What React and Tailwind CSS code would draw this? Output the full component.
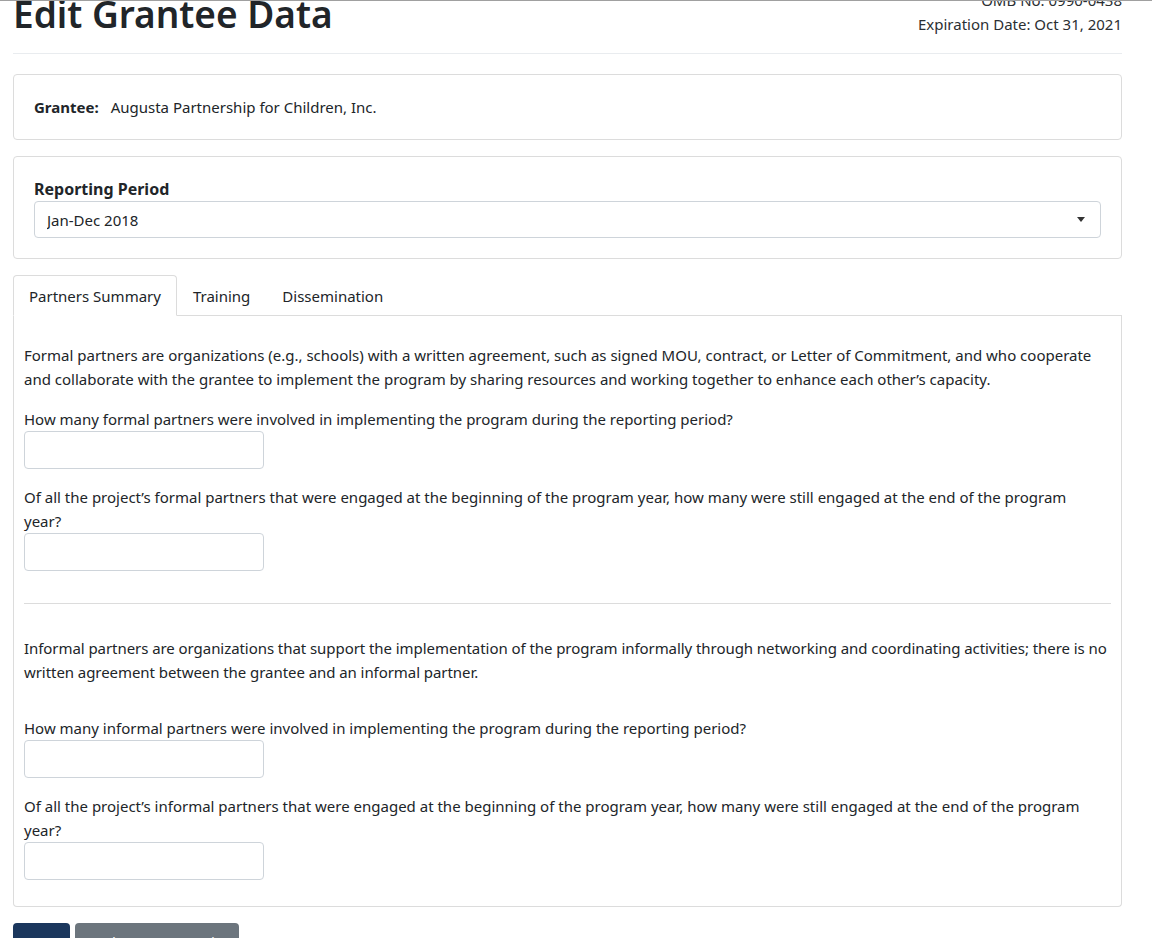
import React, { useState } from 'react';

const questionsFormal = [
    'How many formal partners were involved in implementing the program during the reporting period?',
    "Of all the project's formal partners that were engaged at the beginning of the program year, how many were still engaged at the end of the program year?",
];

const questionsInformal = [
    'How many informal partners were involved in implementing the program during the reporting period?',
    "Of all the project's informal partners that were engaged at the beginning of the program year, how many were still engaged at the end of the program year?",
];

const Question = ({ label }) => {
    const [value, setValue] = useState('');
    return (
        <div className="mb-[16px]">
            <label className="block leading-[24px] pr-[30px]">{label.replace(/'/g, '\u2019')}</label>
            <input
                type="text"
                value={value}
                onChange={(e) => setValue(e.target.value)}
                className="block w-[240px] h-[38px] border border-[#ced4da] rounded-[4px] px-3 outline-none"
            />
        </div>
    );
};

const tabs = ['Partners Summary', 'Training', 'Dissemination'];

const App = () => {
    const [activeTab, setActiveTab] = useState(0);

    return (
        <div
            className="relative w-[1162px] h-[938px] overflow-hidden bg-white text-[#212529] text-[15px] leading-[24px]"
            style={{ fontFamily: '"Noto Sans", "Open Sans", sans-serif' }}
        >
            <div className="absolute top-0 left-0 w-[1152px] h-px bg-[#a0a0a0] z-10" />

            <div className="mx-[13px] w-[1109px] -mt-[12px]">
                {/* page header */}
                <div className="flex justify-between items-end">
                    <h1 className="text-[37px] leading-[48px] font-semibold">Edit Grantee Data</h1>
                    <div className="text-right leading-[24px] text-[#2b2f33] pb-[2px]">
                        <div>OMB No. 0990-0438</div>
                        <div>Expiration Date: Oct 31, 2021</div>
                    </div>
                </div>
                <hr className="mt-[15px] border-t border-[#e9ecef]" />

                {/* grantee card */}
                <div className="mt-[20px] border border-[#dcdcdc] rounded-[4px] px-[20px] py-[20px]">
                    <p>
                        <span className="font-bold mr-[12px]">Grantee:</span>
                        Augusta Partnership for Children, Inc.
                    </p>
                </div>

                {/* reporting period */}
                <div className="mt-[16px] border border-[#dcdcdc] rounded-[4px] px-[20px] pt-[20px] pb-[20px]">
                    <label className="block font-bold leading-[24px] text-[16px]">Reporting Period</label>
                    <div className="relative">
                        <select className="block w-full h-[37px] border border-[#ced4da] rounded-[4px] px-[12px] appearance-none bg-white outline-none">
                            <option>Jan-Dec 2018</option>
                            <option>Jan-Dec 2019</option>
                            <option>Jan-Dec 2020</option>
                        </select>
                        <svg className="absolute right-[16px] top-[16px]" width="8" height="5" viewBox="0 0 8 5">
                            <path d="M0 0 L8 0 L4 5 Z" fill="#333" />
                        </svg>
                    </div>
                </div>

                {/* tabs */}
                <div className="mt-[16px] flex border-b border-[#dcdcdc]">
                    {tabs.map((t, i) => (
                        <button
                            key={t}
                            onClick={() => setActiveTab(i)}
                            className={`h-[41px] px-[15px] -mb-px border rounded-t-[4px] ${
                                activeTab === i ? 'border-[#dcdcdc] border-b-white bg-white' : 'border-transparent'
                            }`}
                        >
                            {t}
                        </button>
                    ))}
                </div>
                <div className="border border-t-0 border-[#dcdcdc] rounded-b-[4px] px-[10px] pt-[27px] pb-[10px]">
                    <p className="mb-[16px]">
                        Formal partners are organizations (e.g., schools) with a written agreement, such as signed MOU, contract, or Letter of
                        Commitment, and who cooperate and collaborate with the grantee to implement the program by sharing resources and working
                        together to enhance each other&rsquo;s capacity.
                    </p>
                    {questionsFormal.map((q) => (
                        <Question key={q} label={q} />
                    ))}
                    <hr className="mt-[32px] mb-[32px] border-t border-[#dcdcdc]" />
                    <p className="mb-[16px] tracking-[-0.06px]">
                        Informal partners are organizations that support the implementation of the program informally through networking and
                        coordinating activities; there is no written agreement between the grantee and an informal partner.
                    </p>
                    <div className="h-[16px]" />
                    {questionsInformal.map((q) => (
                        <Question key={q} label={q} />
                    ))}
                </div>

                {/* actions */}
                <div className="mt-[16px] flex gap-[5px]">
                    <button className="h-[38px] px-[12px] rounded-[4px] bg-[#1b375d] text-white">Save</button>
                    <button className="h-[38px] px-[12px] rounded-[4px] bg-[#6c757d] text-white">Back to Grantee List</button>
                </div>
            </div>
        </div>
    );
};

export default App;
